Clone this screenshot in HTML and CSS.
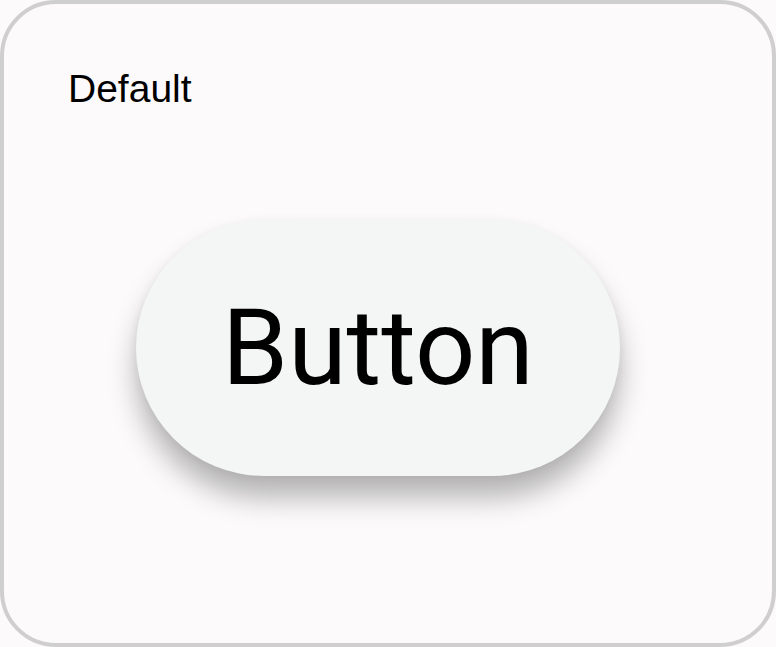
FILE: index.html
```html
<!DOCTYPE html>
<html lang="en">
<head>
<meta charset="utf-8">
<title>Button states</title>
<link rel="stylesheet" href="styles.css">
</head>
<body>
  <section class="state-card">
    <div class="state-label">Default</div>
    <button class="pill-button" type="button">Button</button>
  </section>
</body>
</html>
```
FILE: styles.css
```css
html, body {
  margin: 0;
  padding: 0;
  background: #fcfafb;
}

.state-card {
  box-sizing: border-box;
  width: 776px;
  height: 647px;
  border: 4px solid #cfcfcf;
  border-radius: 56px;
  background: #fcfafb;
  padding: 62px 0 0 62px;
  display: flex;
  flex-direction: column;
  align-items: flex-start;
}

.state-label {
  font-family: "Liberation Sans", Arial, sans-serif;
  font-size: 39px;
  line-height: 46px;
  color: #000;
  padding-left: 2px;
}

.pill-button {
  margin: 108px 0 0 70px;
  width: 484px;
  height: 256px;
  border: none;
  border-radius: 128px;
  background: #f4f5f5;
  color: #000;
  font-family: Roboto, "Noto Sans", sans-serif;
  font-size: 106px;
  font-weight: 400;
  padding: 0;
  box-shadow: 0 22px 28px rgba(0, 0, 0, 0.28), 0 2px 10px rgba(0, 0, 0, 0.05);
  cursor: pointer;
}
```
